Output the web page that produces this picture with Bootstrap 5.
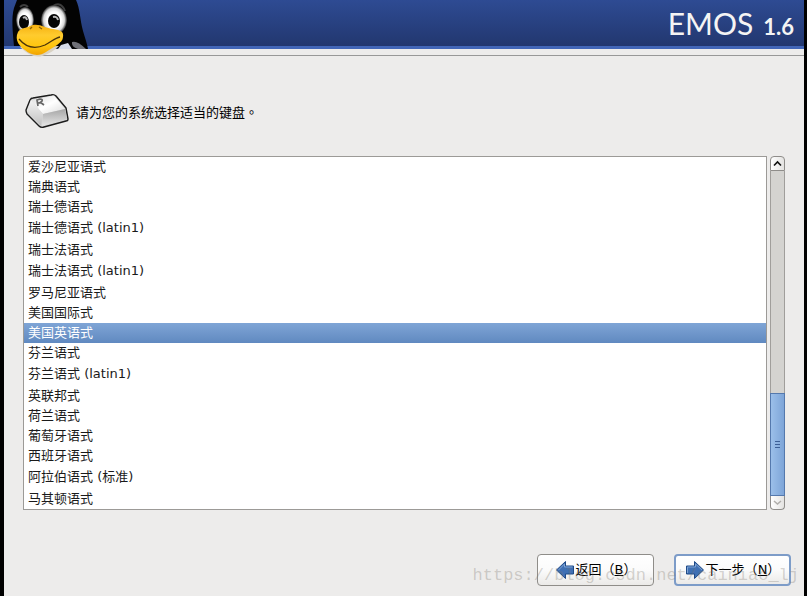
<!DOCTYPE html>
<html lang="zh-CN">
<head>
<meta charset="utf-8">
<meta name="viewport" content="width=device-width, initial-scale=1">
<title>EMOS 1.6</title>
<link rel="stylesheet" href="https://cdn.jsdelivr.net/npm/bootstrap@5.3.0/dist/css/bootstrap.min.css">
<style>
body{background:#000;font-family:"DejaVu Sans","Noto Sans CJK SC",sans-serif;font-size:13px;line-height:20px;color:#000}
.screen{margin:0 3px 0 4px;background:#edeceb}
.banner{height:49px;background:linear-gradient(#2e4b93,#22376f);border-bottom:3px solid #4266b8}
.rule{height:7px;border-bottom:1px solid #989898}
.tux{position:absolute;left:4px;top:0}
.brand{font-family:Lato,sans-serif;color:#f4f4f4;line-height:46px;padding-right:10px}
.brand-name{font-size:30px}
.brand-ver{font-size:22px;font-weight:700;margin-left:10px}
.prompt{padding:37px 21px 0;height:100px;gap:7px}
.prompt-text{padding-top:9px}
.zh-stop{font-family:"Noto Sans CJK TC",sans-serif}
.picker{padding:0 19px;gap:3px}
.keys{border:1px solid #9c9a97;border-radius:0;background:#fff}
.keys .list-group-item{border:0;padding:0 4px;line-height:20px;color:#1a1a1a;background:#fff}
.keys .list-group-item.mixed{line-height:21px;padding-bottom:2px}
.keys .list-group-item.active{margin:0;color:#fff;background:linear-gradient(#7fa5d6,#6089c0)}
.scroller{width:15px}
.step{height:15px;border:1px solid #8f8d8a;background:linear-gradient(90deg,#fff,#e4e3e1);padding:0}
.step svg,.actions svg{display:block}
.step-up{border-radius:4px 4px 0 0}
.step-down{border-radius:0 0 4px 4px;height:14px;border-top:0}
.trough{background:#d4d3d0;border:solid #a09e9b;border-width:0 1px}
.thumb{height:103px;border:1px solid #5579ad;background:linear-gradient(90deg,#9bbfe9,#7ea5d8)}
.actions{gap:20px;padding:44px 13px 10px 0}
.nav-btn{width:117px;height:32px;padding:0;gap:1px;border:1px solid #8f8d89;border-radius:4px;background:linear-gradient(#fff,#fbfbfb 50%,#ebeae8);font-size:13px;line-height:20px;color:#000}
.nav-btn.default{border:2px solid #7d9cc8}
.stamp{position:absolute;right:5px;bottom:8px;font-family:"Liberation Mono",monospace;font-size:17px;line-height:24px;color:rgba(120,115,105,.3);pointer-events:none}
</style>
<script src="https://cdn.jsdelivr.net/npm/bootstrap@5.3.0/dist/js/bootstrap.bundle.min.js" defer></script>
</head>
<body>
<div class="screen position-relative min-vh-100 d-flex flex-column">
  <header>
    <div class="banner d-flex justify-content-end">
      <h1 class="brand d-flex align-items-baseline m-0 fw-normal"><span class="brand-name">EMOS</span><span class="brand-ver">1.6</span></h1>
    </div>
    <div class="rule"></div>
    <svg class="tux" width="84" height="60" viewBox="0 0 84 60" aria-hidden="true">
      <defs>
        <linearGradient id="beak" x1="0" y1="0" x2="0" y2="1"><stop offset="0" stop-color="#f5b010"/><stop offset=".35" stop-color="#ffcb2e"/><stop offset=".7" stop-color="#ffc610"/><stop offset="1" stop-color="#f2a400"/></linearGradient>
        <radialGradient id="eye"><stop offset=".55" stop-color="#fff"/><stop offset=".8" stop-color="#d8d8d8"/><stop offset="1" stop-color="#222"/></radialGradient>
      </defs>
      <path d="M9 0H68C72 8 72 20 75 31C77 38 79 43 80 49H56L14 46H6C5 34 3 18 6 8Z" fill="#030303"/>
      <path d="M53 45L60 43Q62 46 64 49H50Z" fill="#d7dcea"/>
      <path d="M64 42Q69 40 78 49H70Q63 47 64 42Z" fill="#707178"/>
      <path d="M12 7Q16 3 20 7M45 6Q53 1 57 11" fill="none" stroke="#3d3d3d" stroke-width="2"/>
      <ellipse cx="17" cy="20" rx="9" ry="13" fill="url(#eye)"/>
      <ellipse cx="46" cy="20" rx="13" ry="15" fill="url(#eye)"/>
      <ellipse cx="16" cy="22" rx="5" ry="7" fill="#050505"/>
      <ellipse cx="46" cy="21" rx="6" ry="7" fill="#050505"/>
      <path d="M15 18Q18 16 19 20" fill="none" stroke="#bcbcbc" stroke-width="2"/>
      <path d="M45 17Q49 16 50 20" fill="none" stroke="#bcbcbc" stroke-width="2"/>
      <path d="M12 47Q24 59 34 56Q44 53 51 46Z" fill="#d9d2c3"/>
      <path d="M10 32C12 28 19 28 22 26C30 22 37 28 45 29C53 30 56 32 55 37C55 43 45 47 38 52C31 57 22 55 17 50C12 47 6 40 10 32Z" fill="url(#beak)"/>
      <path d="M11 39C20 50 30 48 37 45C43 42 47 38 52 37" fill="none" stroke="#49330a" stroke-width="1.3"/>
      <path d="M22 29L24 27M31 27L34 29" stroke="#8c6205" stroke-width="1.4"/>
    </svg>
  </header>
  <main>
    <div class="prompt d-flex align-items-start">
      <svg class="flex-shrink-0" width="44" height="38" viewBox="0 0 44 38" aria-hidden="true">
        <defs><linearGradient id="cap" x1="0" y1="0" x2="1" y2="1"><stop offset="0" stop-color="#d9d9d9"/><stop offset=".5" stop-color="#fff"/><stop offset="1" stop-color="#dcdcdc"/></linearGradient><linearGradient id="front" x1="0" y1="0" x2="0" y2="1"><stop offset="0" stop-color="#a6a6a6"/><stop offset="1" stop-color="#e6e6e6"/></linearGradient><linearGradient id="side" x1="0" y1="0" x2="0" y2="1"><stop offset="0" stop-color="#f4f4f4"/><stop offset="1" stop-color="#c0c0c0"/></linearGradient></defs>
        <path d="M5 7Q6 5 8 5L26 2Q29 1 31 3L41 15L43 26Q43 28 41 28L19 34Q16 35 14 33L2 21Q1 19 1 17Z" fill="#d7d7d7" stroke="#1c1c1c" stroke-width="1.4" stroke-linejoin="round"/>
        <path d="M6 7L27 3Q29 2 30 4L40 16L18 21Z" fill="url(#cap)"/>
        <path d="M18 21L40 16L42 26L17 33Z" fill="url(#front)"/>
        <path d="M6 7L18 21L16 33L2 18Z" fill="url(#side)"/>
        <path d="M13 13L12 7L15 6Q18 6 17 8Q16 10 13 10M15 9L19 12" fill="none" stroke="#666" stroke-width="1.7"/>
      </svg>
      <div id="ask" class="prompt-text">请为您的系统选择适当的键盘<span class="zh-stop" lang="zh-TW">。</span></div>
    </div>
    <div class="picker d-flex">
      <div class="keys list-group flex-grow-1" role="listbox" aria-labelledby="ask">
        <button type="button" role="option" class="list-group-item list-group-item-action">爱沙尼亚语式</button>
        <button type="button" role="option" class="list-group-item list-group-item-action">瑞典语式</button>
        <button type="button" role="option" class="list-group-item list-group-item-action">瑞士德语式</button>
        <button type="button" role="option" class="list-group-item list-group-item-action mixed">瑞士德语式 (latin1)</button>
        <button type="button" role="option" class="list-group-item list-group-item-action">瑞士法语式</button>
        <button type="button" role="option" class="list-group-item list-group-item-action mixed">瑞士法语式 (latin1)</button>
        <button type="button" role="option" class="list-group-item list-group-item-action">罗马尼亚语式</button>
        <button type="button" role="option" class="list-group-item list-group-item-action">美国国际式</button>
        <button type="button" role="option" class="list-group-item list-group-item-action active" aria-selected="true">美国英语式</button>
        <button type="button" role="option" class="list-group-item list-group-item-action">芬兰语式</button>
        <button type="button" role="option" class="list-group-item list-group-item-action mixed">芬兰语式 (latin1)</button>
        <button type="button" role="option" class="list-group-item list-group-item-action">英联邦式</button>
        <button type="button" role="option" class="list-group-item list-group-item-action">荷兰语式</button>
        <button type="button" role="option" class="list-group-item list-group-item-action">葡萄牙语式</button>
        <button type="button" role="option" class="list-group-item list-group-item-action">西班牙语式</button>
        <button type="button" role="option" class="list-group-item list-group-item-action mixed">阿拉伯语式 (标准)</button>
        <button type="button" role="option" class="list-group-item list-group-item-action">马其顿语式</button>
      </div>
      <div class="scroller d-flex flex-column flex-shrink-0">
        <button type="button" class="step step-up" aria-label="向上滚动"><svg width="13" height="13" viewBox="0 0 13 13"><path d="M3 8.500L6.500 5L10 8.500" fill="none" stroke="#111" stroke-width="1.6"/></svg></button>
        <div class="trough flex-grow-1"></div>
        <div class="thumb d-flex align-items-center justify-content-center"><svg width="5" height="8" viewBox="0 0 5 8"><path d="M0 .5H5M0 3.500H5M0 6.500H5" stroke="#3c5f96"/></svg></div>
        <button type="button" class="step step-down" aria-label="向下滚动"><svg width="13" height="13" viewBox="0 0 13 13"><path d="M3 5L6.500 8L10 5" fill="none" stroke="#b0aeab" stroke-width="1.5"/></svg></button>
      </div>
    </div>
  </main>
  <footer class="actions d-flex justify-content-end">
    <button type="button" class="nav-btn d-flex align-items-center justify-content-center" accesskey="b">
      <svg width="20" height="20" viewBox="0 0 20 20" aria-hidden="true"><path d="M1.500 10L10.500 1.500V6H18.500V14H10.500V18.500Z" fill="#3f70b4" stroke="#1f4a87"/><path d="M3.500 10L9.500 4V7H17.500" fill="none" stroke="#7ea2d2"/></svg>
      <span>返回（<u>B</u>）</span>
    </button>
    <button type="button" class="nav-btn default d-flex align-items-center justify-content-center" accesskey="n">
      <svg width="20" height="20" viewBox="0 0 20 20" aria-hidden="true"><path d="M18.500 10L9.500 1.500V6H1.500V14H9.500V18.500Z" fill="#3f70b4" stroke="#1f4a87"/><path d="M2.500 13V7H10.500V4L17 10" fill="none" stroke="#7ea2d2"/></svg>
      <span>下一步（<u>N</u>）</span>
    </button>
  </footer>
  <div class="stamp">https://blog.csdn.net/cainiao_lj</div>
</div>
</body>
</html>
